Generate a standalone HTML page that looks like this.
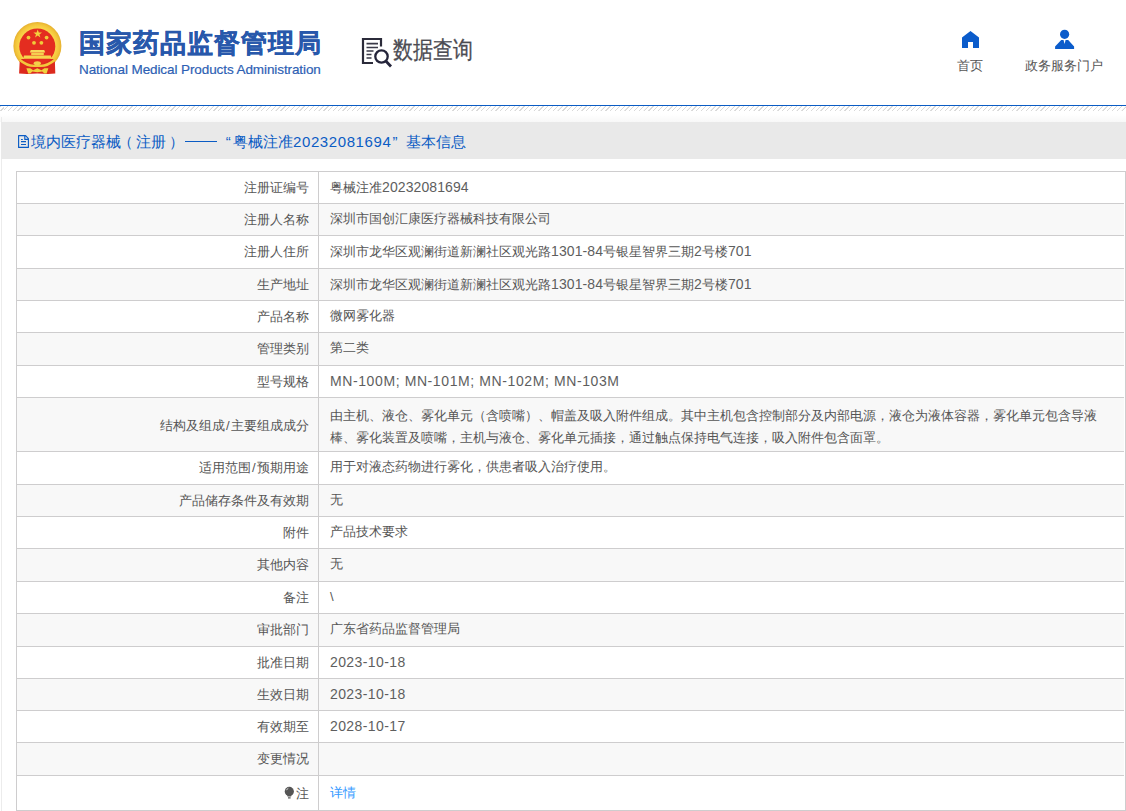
<!DOCTYPE html>
<html><head><meta charset="utf-8">
<style>
html,body{margin:0;padding:0;}
body{width:1126px;height:811px;overflow:hidden;position:relative;background:#fff;font-family:"Liberation Sans",sans-serif;color:#555;font-size:13px;}
.abs{position:absolute;white-space:nowrap;}
#title{left:78.8px;top:26.5px;font-size:26px;font-weight:bold;color:#2858ab;line-height:32px;letter-spacing:1.05px;-webkit-text-stroke:0.4px #2858ab}
#eng{left:79px;top:62px;font-size:13.5px;color:#2d5fb4;line-height:16px;letter-spacing:-0.09px;-webkit-text-stroke:0.2px #2d5fb4}
#dq{left:393px;top:34.5px;font-size:23.5px;color:#4b4b52;-webkit-text-stroke:0.3px #4b4b52;line-height:30px;transform-origin:0 0;transform:scaleX(0.83)}
.nav{font-size:13px;color:#555;line-height:16px}
#blue{left:0;top:105px;width:1126px;height:1px;background:#0b5cc4}
#hatch{left:0;top:106px;width:1126px;height:5px;background:repeating-linear-gradient(135deg,#fff 0,#fff 2.4px,#d9d9d9 2.6px,#d9d9d9 3.38px);background-position:4px 0}
#shade{left:0;top:114px;width:1126px;height:8px;background:linear-gradient(#fff,#f8f8f8)}
#pl{left:1px;top:117px;width:1px;height:694px;background:#ececec}
#bar{left:1px;top:122px;width:1125px;height:37px;background:#e9e9e9}
.bt{top:132px;font-size:15px;color:#0b5cc4;line-height:20px}
#tbl{left:16px;top:171px;width:1110px;height:640px;}
.r{position:absolute;left:0;width:1108px;box-sizing:border-box;border:1px solid #cecdce;border-right:0}
.lab{position:absolute;left:0;width:292px;text-align:right;top:1px;bottom:0;line-height:30px;padding-right:10px;white-space:nowrap}
.val{position:absolute;left:313px;top:0;bottom:0;line-height:30px;white-space:nowrap}
.last .lab{top:3px}
.last .val{top:2px}
.tall .lab{line-height:52px;top:2px}
.tall .val{line-height:22px;padding-top:7px}
.n{font-size:14px;letter-spacing:0.1px;color:#5e5e5e}
.d{font-size:14px;letter-spacing:0.4px;color:#5e5e5e}
.m{font-size:14px;letter-spacing:0.6px;color:#5e5e5e}
.sl{padding:0 1.3px}
.lk{color:#3399ff}
.bulb{vertical-align:-1px;margin-right:1px}
</style></head><body>
<svg class=abs style="left:0;top:0" width="80" height="80" viewBox="0 0 80 80">
  <defs><radialGradient id="g1" cx="50%" cy="50%" r="50%"><stop offset="0.72" stop-color="#fad94e"/><stop offset="0.9" stop-color="#f3c53a"/><stop offset="1" stop-color="#e6b030"/></radialGradient></defs>
  <circle cx="37.4" cy="46" r="24" fill="url(#g1)"/>
  <path d="M19.8 59 L54.8 59 L55.3 73.5 L48 74 L37.3 73.6 L27 74 L19.1 73.5 Z" fill="#dc2a1e"/>
  <circle cx="37.3" cy="46.4" r="18" fill="#e42d20"/>
  <polygon points="37.7,29.5 38.8,32.5 42,32.5 39.4,34.4 40.4,37.5 37.7,35.6 35,37.5 36,34.4 33.4,32.5 36.6,32.5" fill="#f3d23f"/>
  <circle cx="28.5" cy="37.6" r="1.9" fill="#f0cc3a"/><circle cx="46.6" cy="37.6" r="1.9" fill="#f0cc3a"/>
  <circle cx="34" cy="42.8" r="1.9" fill="#f0cc3a"/><circle cx="41.4" cy="42.8" r="1.9" fill="#f0cc3a"/>
  <path d="M29.8 52.6 L30.8 50.1 L44.2 50.1 L45.2 52.6 Z" fill="#f7da5a"/>
  <rect x="31.2" y="52.6" width="12.6" height="2.6" fill="#f5d050"/>
  <path d="M23.2 58.7 L24 55.4 L50.8 55.4 L51.5 58.7 Z" fill="#f7d54e"/>
  <path d="M19.3 59.5 Q28 67.2 37.3 65.6 Q46.5 67.2 55.3 59.5" stroke="#f3c83c" stroke-width="2.4" fill="none"/>
  <ellipse cx="37.3" cy="63.3" rx="3.6" ry="2.1" fill="#f4d04a"/>
  <path d="M26.4 68.3 L30.2 68.3 L33.2 70.2 L37.3 68.2 L41.4 70.2 L44.4 68.3 L48.4 68.3 L46.6 73.6 L44.4 73.6 L42.2 71.6 L37.3 72.2 L32.4 71.6 L30.2 73.6 L28.2 73.6 Z" fill="#efd23e"/>
</svg>
<div id=title class=abs>国家药品监督管理局</div>
<div id=eng class=abs>National Medical Products Administration</div>
<svg class=abs style="left:360px;top:36px" width="36" height="34" viewBox="0 0 36 34">
  <path d="M13 27 H3 V3 H21 V10.5" stroke="#2b2b3a" stroke-width="2.2" fill="none"/>
  <path d="M6.5 7.6 H18 M6.5 11.5 H18 M6.5 15 H13.5 M6.5 18.5 H11.5 M6.5 22 H11.5" stroke="#3a3a48" stroke-width="1.6"/>
  <circle cx="21.5" cy="20.5" r="6.2" stroke="#24243a" stroke-width="2.3" fill="none"/>
  <path d="M25.8 25 L31 30.5" stroke="#24243a" stroke-width="2.8"/>
</svg>
<div id=dq class=abs>数据查询</div>
<svg class=abs style="left:961px;top:30px" width="19" height="19" viewBox="0 0 19 19">
  <path d="M1 7.5 L9.5 1 L18 7.5 V18 H12 V12 H7 V18 H1 Z" fill="#0b5ccb"/>
</svg>
<div class="abs nav" style="left:957px;top:58px">首页</div>
<svg class=abs style="left:1054px;top:29px" width="21" height="21" viewBox="0 0 21 21">
  <circle cx="10.6" cy="5.3" r="4.6" fill="#0b5ccb"/>
  <path d="M1.1 17.5 L7.2 11 H9.5 L10.6 15 L11.6 11 H14.2 L20.1 17.5 V20 H1.1 Z" fill="#0b5ccb"/>
</svg>
<div class="abs nav" style="left:1025px;top:58px">政务服务门户</div>
<div id=blue class=abs></div>
<div id=hatch class=abs></div>
<div id=shade class=abs></div>
<div id=pl class=abs></div>
<div id=bar class=abs></div>
<svg class=abs style="left:14px;top:130px" width="20" height="22" viewBox="0 0 20 22"><path d="M4.6 5.6 H11.6 L14.4 8.6 V17.4 H4.6 Z M10.8 5.6 V9.4 H14.4 M7 9.5 H8.8 M7 11.6 H12 M7 14.5 H12" stroke="#0b5cc4" stroke-width="1.15" fill="none" stroke-linejoin="round"/></svg>
<div class="abs bt" style="left:31px">境内医疗器械</div>
<div class="abs bt" id=bp1 style="left:117.5px">（</div>
<div class="abs bt" style="left:136px">注册</div>
<div class="abs bt" id=bp2 style="left:169.3px">）</div>
<div class=abs style="left:185px;top:141px;width:32px;height:1px;background:#0b5cc4"></div>
<div class="abs bt" id=bq1 style="left:225.7px">“</div>
<div class="abs bt" style="left:233px">粤械注准</div>
<div class="abs bt" style="left:293px;font-size:15px;letter-spacing:0.6px">20232081694</div>
<div class="abs bt" id=bq2 style="left:392.5px">”</div>
<div class="abs bt" style="left:406px">基本信息</div>
<div id=tbl class=abs>
<div class="r" style="top:0px;height:33px;background:#fff"><div class=lab>注册证编号</div><div class=val>粤械注准<span class=n>20232081694</span></div></div>
<div class="r" style="top:32px;height:33px;background:#f8f8f8"><div class=lab>注册人名称</div><div class=val>深圳市国创汇康医疗器械科技有限公司</div></div>
<div class="r" style="top:64px;height:34px;background:#fff"><div class=lab>注册人住所</div><div class=val>深圳市龙华区观澜街道新澜社区观光路<span class=n>1301-84</span>号银星智界三期<span class=n>2</span>号楼<span class=n>701</span></div></div>
<div class="r" style="top:97px;height:33px;background:#f8f8f8"><div class=lab>生产地址</div><div class=val>深圳市龙华区观澜街道新澜社区观光路<span class=n>1301-84</span>号银星智界三期<span class=n>2</span>号楼<span class=n>701</span></div></div>
<div class="r" style="top:129px;height:33px;background:#fff"><div class=lab>产品名称</div><div class=val>微网雾化器</div></div>
<div class="r" style="top:161px;height:34px;background:#f8f8f8"><div class=lab>管理类别</div><div class=val>第二类</div></div>
<div class="r" style="top:194px;height:33px;background:#fff"><div class=lab>型号规格</div><div class=val><span class=m>MN-100M; MN-101M; MN-102M; MN-103M</span></div></div>
<div class="r tall" style="top:226px;height:55px;background:#f8f8f8"><div class=lab>结构及组成<span class=sl>/</span>主要组成成分</div><div class=val>由主机、液仓、雾化单元（含喷嘴）、帽盖及吸入附件组成。其中主机包含控制部分及内部电源，液仓为液体容器，雾化单元包含导液<br>棒、雾化装置及喷嘴，主机与液仓、雾化单元插接，通过触点保持电气连接，吸入附件包含面罩。</div></div>
<div class="r" style="top:280px;height:34px;background:#fff"><div class=lab>适用范围<span class=sl>/</span>预期用途</div><div class=val>用于对液态药物进行雾化，供患者吸入治疗使用。</div></div>
<div class="r" style="top:313px;height:33px;background:#f8f8f8"><div class=lab>产品储存条件及有效期</div><div class=val>无</div></div>
<div class="r" style="top:345px;height:33px;background:#fff"><div class=lab>附件</div><div class=val>产品技术要求</div></div>
<div class="r" style="top:377px;height:34px;background:#f8f8f8"><div class=lab>其他内容</div><div class=val>无</div></div>
<div class="r" style="top:410px;height:33px;background:#fff"><div class=lab>备注</div><div class=val>\</div></div>
<div class="r" style="top:442px;height:34px;background:#f8f8f8"><div class=lab>审批部门</div><div class=val>广东省药品监督管理局</div></div>
<div class="r" style="top:475px;height:33px;background:#fff"><div class=lab>批准日期</div><div class=val><span class=d>2023-10-18</span></div></div>
<div class="r" style="top:507px;height:33px;background:#f8f8f8"><div class=lab>生效日期</div><div class=val><span class=d>2023-10-18</span></div></div>
<div class="r" style="top:539px;height:33px;background:#fff"><div class=lab>有效期至</div><div class=val><span class=d>2028-10-17</span></div></div>
<div class="r" style="top:571px;height:34px;background:#f8f8f8"><div class=lab>变更情况</div><div class=val></div></div>
<div class="r last" style="top:604px;height:36px;background:#fff"><div class=lab><svg class=bulb width="11" height="13" viewBox="0 0 11 13"><circle cx="5.3" cy="5.4" r="4.6" fill="#555"/><path d="M3.4 8.5 H7.2 V10.6 H3.4 Z M4 11.3 H6.6 V12.4 H4 Z" fill="#555"/><path d="M2.6 4.2c.2-1 .9-1.7 1.8-2" stroke="#ddd" stroke-width=".9" fill="none"/></svg>注</div><div class=val><span class=lk>详情</span></div></div>
<div style="position:absolute;left:302px;top:0;width:1px;height:640px;background:#cecdce"></div>
<div style="position:absolute;left:1109px;top:0;width:1px;height:640px;background:#cecdce"></div>
<div style="position:absolute;left:0;top:0;width:1110px;height:1px;background:#cecdce"></div>
<div style="position:absolute;left:0;top:639px;width:1110px;height:1px;background:#cecdce"></div>
</div>
</body></html>
